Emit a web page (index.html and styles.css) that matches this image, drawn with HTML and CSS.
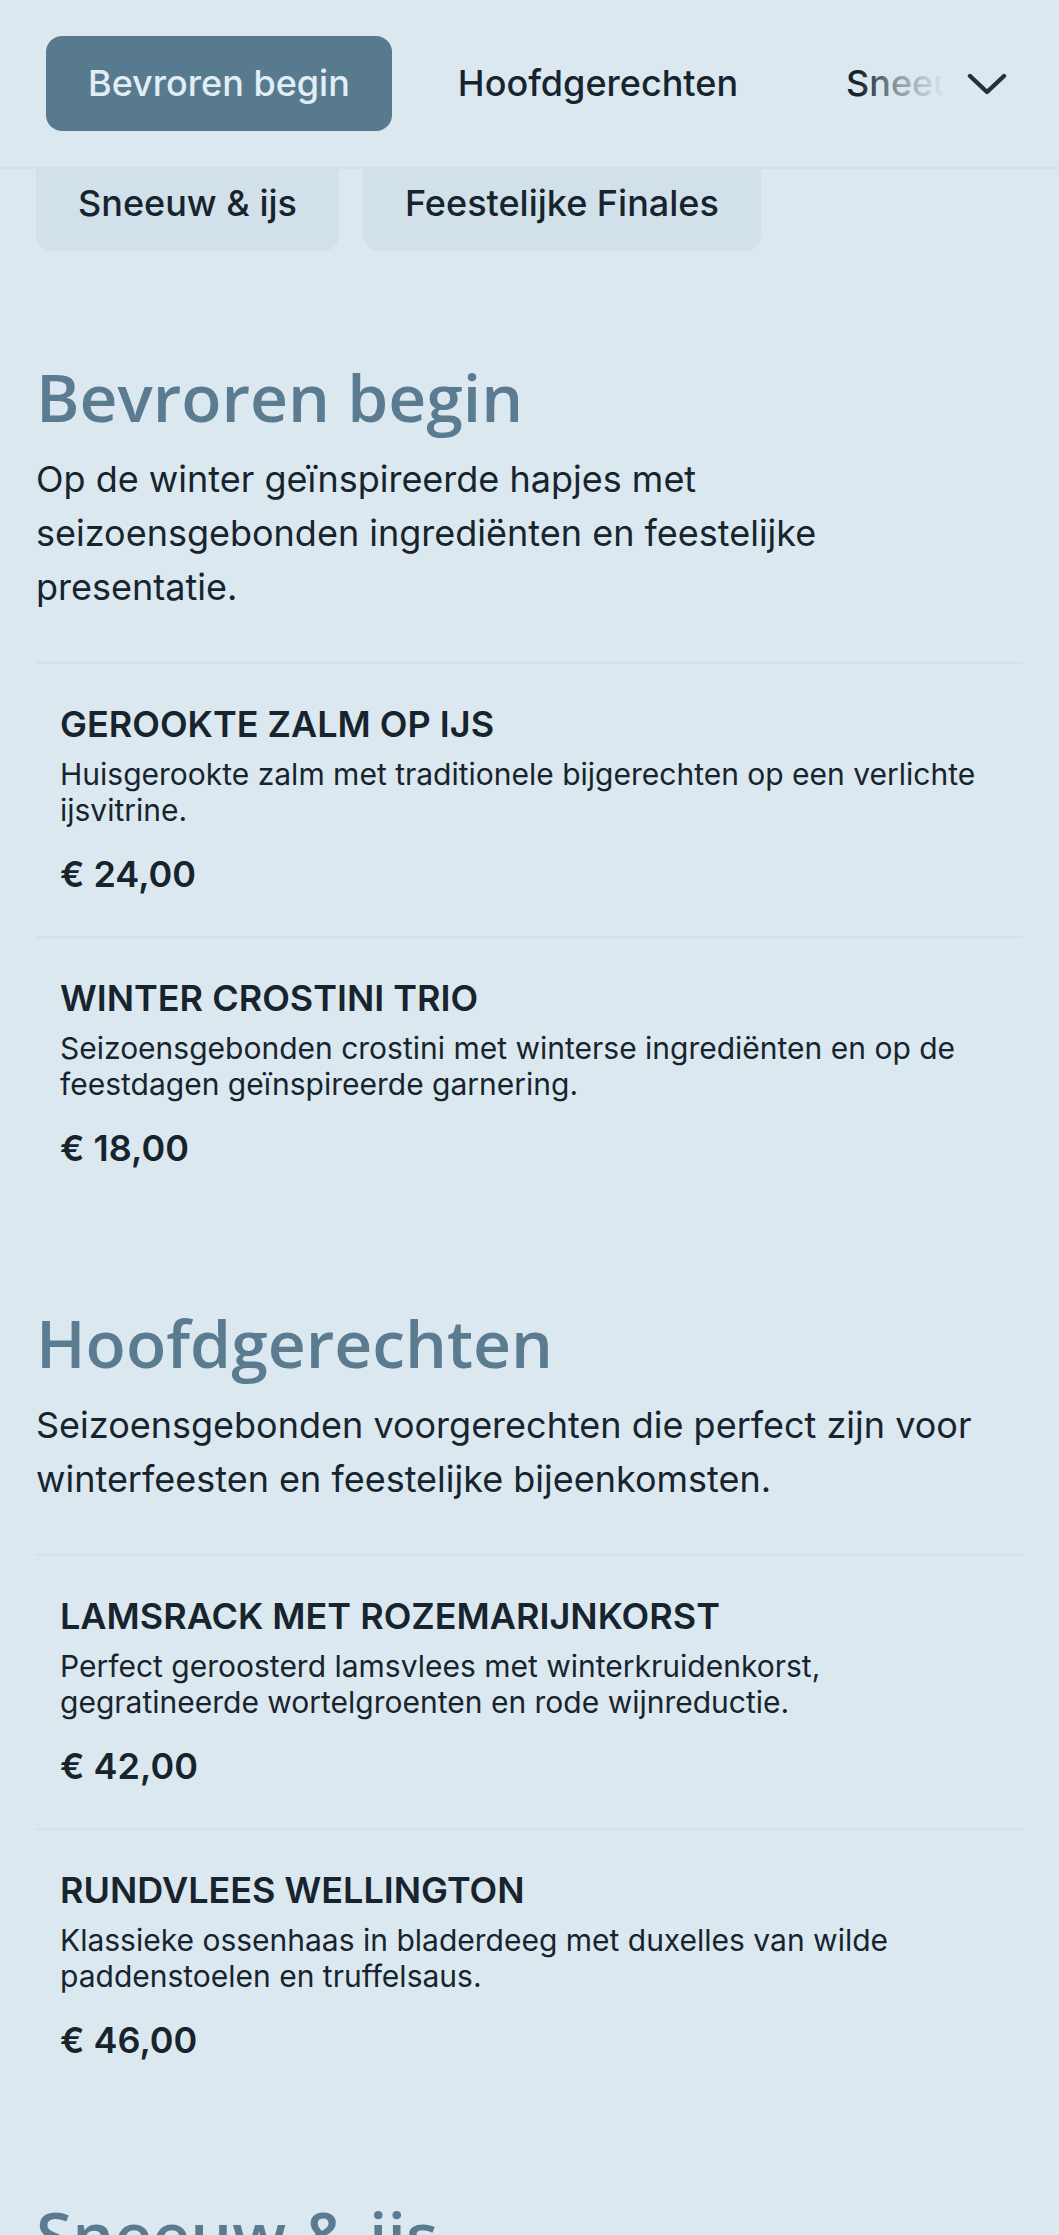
FILE: index.html
```html
<!DOCTYPE html>
<html lang="nl">
<head>
<meta charset="utf-8">
<title>Wintermenu</title>
<link rel="stylesheet" href="styles.css">
</head>
<body>
<header class="topbar">
  <nav class="tabs">
    <div class="tab-track">
      <a class="tab active" href="#bevroren">Bevroren begin</a>
      <a class="tab" href="#hoofd">Hoofdgerechten</a>
      <a class="tab" href="#sneeuw">Sneeuw &amp; ijs</a>
      <a class="tab" href="#finales">Feestelijke Finales</a>
      <div class="fade"></div>
    </div>
    <button class="chev" aria-label="Meer categorieën">
      <svg width="40" height="22" viewBox="0 0 40 22"><polyline points="3,3 20,19 37,3" fill="none" stroke="#23323c" stroke-width="4.4" stroke-linecap="round" stroke-linejoin="round"/></svg>
    </button>
  </nav>
</header>
<div class="more-row">
  <a class="tab muted" href="#sneeuw">Sneeuw &amp; ijs</a>
  <a class="tab muted" href="#finales">Feestelijke Finales</a>
</div>
<main class="menu">
  <section class="section" id="bevroren">
    <h2 class="section-title">Bevroren begin</h2>
    <p class="section-desc">Op de winter geïnspireerde hapjes met seizoensgebonden ingrediënten en feestelijke presentatie.</p>
    <ul class="items">
      <li class="item">
        <h3 class="item-name">GEROOKTE ZALM OP IJS</h3>
        <p class="item-desc">Huisgerookte zalm met traditionele bijgerechten op een verlichte ijsvitrine.</p>
        <div class="item-price">€ 24,00</div>
      </li>
      <li class="item">
        <h3 class="item-name">WINTER CROSTINI TRIO</h3>
        <p class="item-desc">Seizoensgebonden crostini met winterse ingrediënten en op de feestdagen geïnspireerde garnering.</p>
        <div class="item-price">€ 18,00</div>
      </li>
    </ul>
  </section>
  <section class="section" id="hoofd">
    <h2 class="section-title">Hoofdgerechten</h2>
    <p class="section-desc">Seizoensgebonden voorgerechten die perfect zijn voor winterfeesten en feestelijke bijeenkomsten.</p>
    <ul class="items">
      <li class="item">
        <h3 class="item-name">LAMSRACK MET ROZEMARIJNKORST</h3>
        <p class="item-desc">Perfect geroosterd lamsvlees met winterkruidenkorst, gegratineerde wortelgroenten en rode wijnreductie.</p>
        <div class="item-price">€ 42,00</div>
      </li>
      <li class="item">
        <h3 class="item-name">RUNDVLEES WELLINGTON</h3>
        <p class="item-desc">Klassieke ossenhaas in bladerdeeg met duxelles van wilde paddenstoelen en truffelsaus.</p>
        <div class="item-price">€ 46,00</div>
      </li>
    </ul>
  </section>
  <section class="section" id="sneeuw">
    <h2 class="section-title">Sneeuw &amp; ijs</h2>
    <p class="section-desc">Verfrissende ijscreaties en sorbets met winterse smaken.</p>
  </section>
</main>
</body>
</html>
```
FILE: styles.css
```css
* { box-sizing: border-box; }
html, body {
  margin: 0;
  background: #dbe8f0;
  color: #17242d;
  font-family: Inter, "Noto Sans", sans-serif;
}
a { color: inherit; text-decoration: none; }

.topbar {
  position: relative;
  z-index: 2;
  background: #dbe8f0;
  border-bottom: 2px solid #d2e0e9;
  padding: 36px 40px 36px 46px;
}
.tabs {
  display: flex;
  align-items: center;
}
.tab-track {
  position: relative;
  flex: 1;
  display: flex;
  gap: 24px;
  overflow: hidden;
  white-space: nowrap;
}
.tab {
  flex: none;
  display: block;
  padding: 20px 42px;
  font-size: 36px;
  line-height: 55px;
  font-weight: 500;
  border-radius: 16px;
  color: #17242d;
}
.tab.active {
  background: #587a8f;
  color: #e2eef6;
}
.fade {
  position: absolute;
  top: 0;
  right: 0;
  bottom: 0;
  width: 96px;
  background: linear-gradient(to right, rgba(219,232,240,0) 0%, rgba(219,232,240,0.6) 40%, #dbe8f0 90%);
}
.chev {
  flex: none;
  width: 64px;
  height: 64px;
  border: 0;
  padding: 0;
  background: transparent;
  display: flex;
  align-items: center;
  justify-content: center;
}

.more-row {
  display: flex;
  gap: 24px;
  margin-top: -13px;
  padding: 0 36px;
}
.tab.muted {
  background: #d2e0e9;
}

.menu {
  padding: 59px 36px 0;
}
.section {
  padding: 47px 0;
}
.section-title {
  margin: 0 0 16px;
  font-family: "Open Sans", Lato, sans-serif;
  font-weight: 600;
  font-size: 66px;
  line-height: 1.2;
  color: #5a7b90;
}
.section-desc {
  margin: 0 0 48px;
  max-width: 950px;
  font-size: 36px;
  line-height: 54px;
  color: #17242d;
}
.items {
  list-style: none;
  margin: 0;
  padding: 0;
}
.item {
  border-top: 2px solid #d3e0e8;
  padding: 39px 24px 39px;
}
.item-name {
  margin: 0 0 10px;
  font-size: 36px;
  line-height: 1.2;
  font-weight: 600;
  color: #17242d;
}
.item-desc {
  margin: 0 0 25px;
  font-size: 30px;
  line-height: 36px;
  color: #17242d;
}
.item-price {
  font-size: 36px;
  line-height: 1.2;
  font-weight: 600;
  color: #17242d;
}
```
